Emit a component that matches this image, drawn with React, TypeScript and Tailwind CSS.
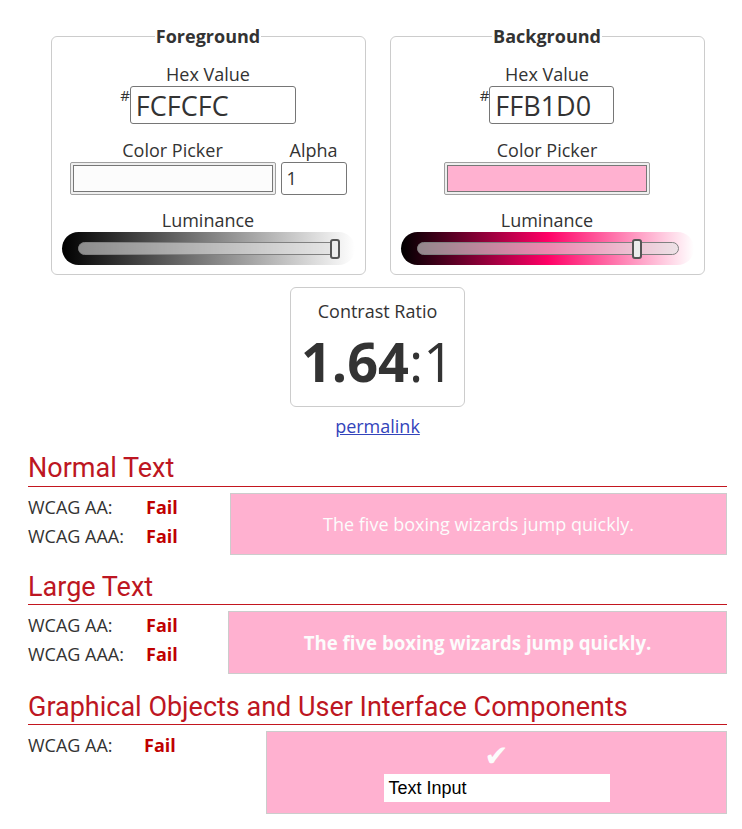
const PINK = "#FFB1D0";

type SliderProps = { gradient: string; thumbLeft: string };

// luminance slider drawn with divs
const LumSlider = ({ gradient, thumbLeft }: SliderProps) => (
  <div className={`relative h-[33px] w-full rounded-full ${gradient}`}>
    <div className="absolute left-[16px] right-[15px] top-[10px] h-[13px] rounded-full border border-[#808080] bg-[rgba(225,225,225,0.6)]" />
    <div
      className={`absolute top-[7px] h-[20px] w-[10px] rounded-[3px] border-2 border-[#555] bg-[#ececec] ${thumbLeft}`}
    />
  </div>
);

const Swatch = ({ color }: { color: string }) => (
  <div className="h-[33px] w-[206px] rounded-[2px] border border-[#a0a0a0] bg-[#efefef] p-[2px]">
    <div className="h-full w-full border border-[#777]" style={{ background: color }} />
  </div>
);

const Panel = ({
  title,
  hex,
  hexWidth,
  color,
  alpha,
  gradient,
  thumbLeft,
}: {
  title: string;
  hex: string;
  hexWidth: string;
  color: string;
  alpha?: boolean;
  gradient: string;
  thumbLeft: string;
}) => (
  <fieldset className="w-[315px] rounded-[6px] border border-[#cccccc] px-[10px] pb-[9px]">
    <legend className="mx-auto px-[1px] text-[18px] font-bold leading-[22px] text-[#333]">{title}</legend>
    <div className="mt-[16px] text-center text-[18px] leading-[23px]">Hex Value</div>
    <div className="flex justify-center">
      <span className="mt-[2px] text-[15px] leading-none">#</span>
      <div
        className={`flex h-[38px] items-center rounded-[3px] border border-[#767676] px-[5px] text-[27px] leading-none text-[#333] ${hexWidth}`}
      >
        {hex}
      </div>
    </div>
    <div className="mt-[15px] flex justify-center gap-[5px]">
      <div className="flex flex-col items-center">
        <div className="text-[18px] leading-[23px]">Color Picker</div>
        <Swatch color={color} />
      </div>
      {alpha && (
        <div className="flex flex-col items-center">
          <div className="text-[18px] leading-[23px]">Alpha</div>
          <div className="flex h-[33px] w-[66px] items-center rounded-[3px] border border-[#767676] px-[5px] text-[18px]">
            1
          </div>
        </div>
      )}
    </div>
    <div className="mt-[14px] text-center text-[18px] leading-[23px]">Luminance</div>
    <LumSlider gradient={gradient} thumbLeft={thumbLeft} />
  </fieldset>
);

const Heading = ({ children, pb }: { children: string; pb: string }) => (
  <h2
    className={`border-b border-[#c3161f] font-['Roboto'] text-[27px] leading-[30px] text-[#bd1622] ${pb}`}
  >
    {children}
  </h2>
);

const Rows = ({ rows, width, failOffset }: { rows: string[]; width: string; failOffset: string }) => (
  <div className={`shrink-0 ${width}`}>
    {rows.map((r) => (
      <div key={r} className="flex text-[18px] leading-[29px]">
        <span className={failOffset}>{r}</span>
        <span className="font-bold text-[#c00000]">Fail</span>
      </div>
    ))}
  </div>
);

export default function App() {
  return (
    <div className="min-h-[829px] bg-white pb-4 pl-[28px] pr-[15px] pt-[25px] font-['Open_Sans'] text-[#333]">
      <div className="flex justify-center gap-[24px]">
        <Panel
          title="Foreground"
          hex="FCFCFC"
          hexWidth="w-[166px]"
          color="#FCFCFC"
          alpha
          gradient="bg-[linear-gradient(to_right,#000,#fff)]"
          thumbLeft="left-[268px]"
        />
        <Panel
          title="Background"
          hex="FFB1D0"
          hexWidth="w-[125px]"
          color={PINK}
          gradient="bg-[linear-gradient(to_right,#000,#ff0066,#fff)]"
          thumbLeft="left-[231px]"
        />
      </div>

      {/* contrast ratio */}
      <div className="mx-auto mt-[12px] flex h-[120px] w-[175px] flex-col items-center rounded-[6px] border border-[#cccccc] pt-[11px]">
        <div className="text-[18px] leading-[24px]">Contrast Ratio</div>
        <div className="mt-[6px] text-[54px] leading-[64px] text-[#333]">
          <b>1.64</b>:1
        </div>
      </div>
      <div className="mt-[7px] text-center text-[18px] leading-[24px]">
        <a href="#" className="text-[#3344bb] underline">
          permalink
        </a>
      </div>

      <div className="mt-[15px]">
        <Heading pb="pb-[3px]">Normal Text</Heading>
        <div className="mt-[6px] flex">
          <Rows rows={["WCAG AA:", "WCAG AAA:"]} width="w-[202px]" failOffset="w-[118px]" />
          <div className="flex h-[62px] flex-1 items-center justify-center border border-[#cccccc] bg-[#FFB1D0] text-[18px] text-[#FCFCFC]">
            The five boxing wizards jump quickly.
          </div>
        </div>
      </div>

      <div className="mt-[17px]">
        <Heading pb="pb-[2px]">Large Text</Heading>
        <div className="mt-[6px] flex">
          <Rows rows={["WCAG AA:", "WCAG AAA:"]} width="w-[200px]" failOffset="w-[118px]" />
          <div className="flex h-[63px] flex-1 items-center justify-center border border-[#cccccc] bg-[#FFB1D0] text-[18.66px] font-bold text-[#FCFCFC]">
            The five boxing wizards jump quickly.
          </div>
        </div>
      </div>

      <div className="mt-[18px]">
        <Heading pb="pb-[2px]">Graphical Objects and User Interface Components</Heading>
        <div className="mt-[6px] flex">
          <Rows rows={["WCAG AA:"]} width="w-[238px]" failOffset="w-[116px]" />
          <div className="flex h-[83px] flex-1 flex-col items-center border border-[#cccccc] bg-[#FFB1D0] pt-[8px]">
            <span className="font-['DejaVu_Sans'] text-[29px] leading-[32px] text-[#FCFCFC]">✔</span>
            <div className="mt-[2px] flex h-[28px] w-[226px] items-center bg-white px-[5px] font-['Liberation_Sans'] text-[18px] text-black">
              Text Input
            </div>
          </div>
        </div>
      </div>
    </div>
  );
}
